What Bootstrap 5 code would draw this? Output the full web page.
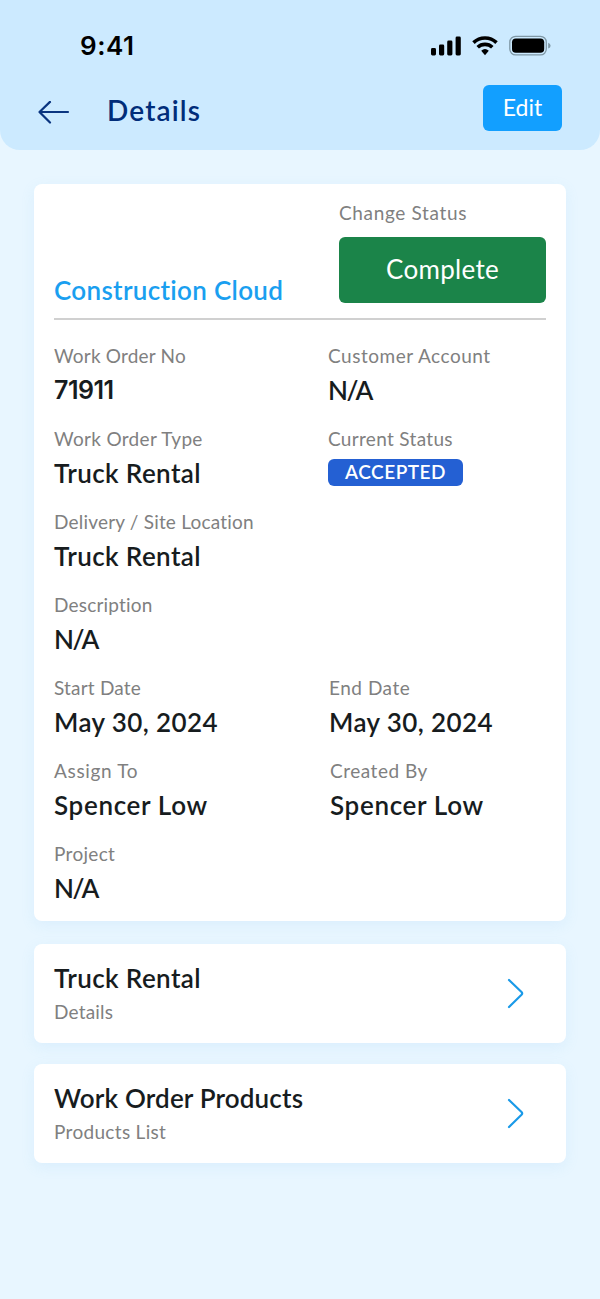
<!DOCTYPE html>
<html lang="en">
<head>
<meta charset="utf-8">
<meta name="viewport" content="width=device-width, initial-scale=1">
<title>Details</title>
<link rel="stylesheet" href="https://cdn.jsdelivr.net/npm/bootstrap@5.3.0/dist/css/bootstrap.min.css">
<style>
body{background:#e8f6ff;font-family:Lato,"Liberation Sans",sans-serif;font-variant-ligatures:none;min-height:1299px;color:#171c1e}
.topbar{height:150px;background:#cceaff;border-radius:0 0 20px 20px;padding:25px 38px 0}
.statusbar{height:40px;padding:0 11px 0 42px}
.clock{font:600 26px/40px Inter,sans-serif;color:#000;letter-spacing:.5px;padding-top:1px}
.titlebar{height:46px;margin-top:20px}
.page-title{font-size:28px;line-height:46px;font-weight:600;color:#002d7a;letter-spacing:1.15px;margin:2px 0 0 37px}
.btn-edit{width:79px;height:46px;background:#129fff;color:#fff;border:0;border-radius:6px;font-size:23px;line-height:44px;padding:0 0 2px}
.content{padding:34px 34px 0}
.panel{background:#fff;border:0;border-radius:8px;box-shadow:0 4px 14px rgba(120,190,240,.12)}
.order{height:737px;padding:15px 20px 0;margin-bottom:23px}
.order-head{height:121px;border-bottom:2px solid #d0d0d0}
.company{font-size:26px;line-height:36px;font-weight:600;color:#1a9ff0;letter-spacing:.32px;margin-bottom:10px}
.caption{font-size:19px;line-height:28px;color:#808080;white-space:nowrap;letter-spacing:.2px}
.value{font-size:26px;line-height:40px;font-weight:600;white-space:nowrap;letter-spacing:.4px}
.ls-3{letter-spacing:.32px}
.ls-5{letter-spacing:.52px}
.ls-6{letter-spacing:.66px}
.ls-1{letter-spacing:.16px}
.order-no{font-family:Inter,sans-serif;font-size:25px;letter-spacing:-.5px}
.empty-value{letter-spacing:-1.4px}
.btn-complete{width:207px;height:66px;background:#1b8449;color:#fff;border:0;border-radius:6px;font-size:26px;letter-spacing:.3px;padding:0 0 2px;margin-top:10px}
.fields{padding-top:22px}
.field-row{height:68px;margin-bottom:15px}
.field{width:274px}
.field-date{width:275px}
.field-person{width:276px}
.status-pill{display:block;width:135px;height:27px;border-radius:6px;background:#2460d3;font-size:19px;line-height:26px;font-weight:600;letter-spacing:.5px;padding:0;margin-top:6px}
.link-card{height:99px;padding:15px 42px 0 20px;margin-bottom:21px;color:inherit;text-decoration:none}
.link-card .value{line-height:38px}
.link-card .caption{line-height:30px}
</style>
</head>
<body>
<header class="topbar">
  <div class="statusbar d-flex justify-content-between align-items-center">
    <span class="clock">9:41</span>
    <svg width="121" height="24" viewBox="0 0 121 24">
      <g><rect x="1" y="15" width="5" height="7.500" rx="1.400"/><rect x="9" y="11.500" width="5.200" height="11" rx="1.400"/><rect x="17.200" y="7.500" width="5.200" height="15" rx="1.400"/><rect x="25.600" y="3.500" width="5.200" height="19" rx="1.400"/></g>
      <g fill="none" stroke="#000" stroke-width="3.600"><path d="M43.500 9.600a16.500 16.500 0 0 1 23 0"/><path d="M47.700 14.300a10.600 10.600 0 0 1 14.600 0"/></g>
      <path d="M51.200 17.800a5.700 5.700 0 0 1 7.600 0L55 22.300z"/>
      <rect x="79.800" y="3.300" width="36.500" height="18.600" rx="5.800" fill="none" stroke="#7f98a6" stroke-width="1.300"/>
      <rect x="82" y="5.500" width="32.200" height="14.200" rx="3.800"/>
      <path d="M118.200 9.800q2.400.9 2.400 2.900t-2.400 2.900z" fill="#7f98a6"/>
    </svg>
  </div>
  <div class="titlebar d-flex">
    <svg class="mt-3" width="32" height="24" viewBox="0 0 32 24" fill="none" stroke="#0a3580" stroke-width="2.200" stroke-linecap="round" stroke-linejoin="round"><path d="M30 11H1.500M12 .9L1.500 11L12 21.500"/></svg>
    <h1 class="page-title">Details</h1>
    <button class="btn btn-edit ms-auto" type="button">Edit</button>
  </div>
</header>
<main class="content">
  <section class="card panel order">
    <div class="order-head d-flex flex-shrink-0 justify-content-between">
      <div class="company align-self-end">Construction Cloud</div>
      <div>
        <div class="caption ls-6">Change Status</div>
        <button class="btn btn-complete" type="button">Complete</button>
      </div>
    </div>
    <div class="fields">
      <div class="field-row d-flex">
        <div class="field"><div class="caption">Work Order No</div><div class="value order-no">71911</div></div>
        <div><div class="caption ls-5">Customer Account</div><div class="value empty-value">N/A</div></div>
      </div>
      <div class="field-row d-flex">
        <div class="field"><div class="caption ls-3">Work Order Type</div><div class="value">Truck Rental</div></div>
        <div><div class="caption ls-3">Current Status</div><span class="badge status-pill">ACCEPTED</span></div>
      </div>
      <div class="field-row"><div class="caption">Delivery / Site Location</div><div class="value">Truck Rental</div></div>
      <div class="field-row"><div class="caption">Description</div><div class="value empty-value">N/A</div></div>
      <div class="field-row d-flex">
        <div class="field-date"><div class="caption">Start Date</div><div class="value">May 30, 2024</div></div>
        <div><div class="caption ls-5">End Date</div><div class="value">May 30, 2024</div></div>
      </div>
      <div class="field-row d-flex">
        <div class="field-person"><div class="caption ls-6">Assign To</div><div class="value ls-6">Spencer Low</div></div>
        <div><div class="caption ls-5">Created By</div><div class="value ls-6">Spencer Low</div></div>
      </div>
      <div class="field-row mb-0"><div class="caption ls-3">Project</div><div class="value empty-value">N/A</div></div>
    </div>
  </section>
  <a class="card panel link-card d-flex flex-row justify-content-between" href="#">
    <div><div class="value">Truck Rental</div><div class="caption">Details</div></div>
    <svg class="mt-3" width="18" height="36" viewBox="0 0 18 36" fill="none" stroke="#1a9ae8" stroke-width="2.200" stroke-linecap="round" stroke-linejoin="round"><path d="M3 5L15.500 17Q16.800 18.400 15.500 19.800L3 32"/></svg>
  </a>
  <a class="card panel link-card d-flex flex-row justify-content-between" href="#">
    <div><div class="value ls-1">Work Order Products</div><div class="caption ls-3">Products List</div></div>
    <svg class="mt-3" width="18" height="36" viewBox="0 0 18 36" fill="none" stroke="#1a9ae8" stroke-width="2.200" stroke-linecap="round" stroke-linejoin="round"><path d="M3 5L15.500 17Q16.800 18.400 15.500 19.800L3 32"/></svg>
  </a>
</main>
<script src="https://cdn.jsdelivr.net/npm/bootstrap@5.3.0/dist/js/bootstrap.bundle.min.js"></script>
</body>
</html>
